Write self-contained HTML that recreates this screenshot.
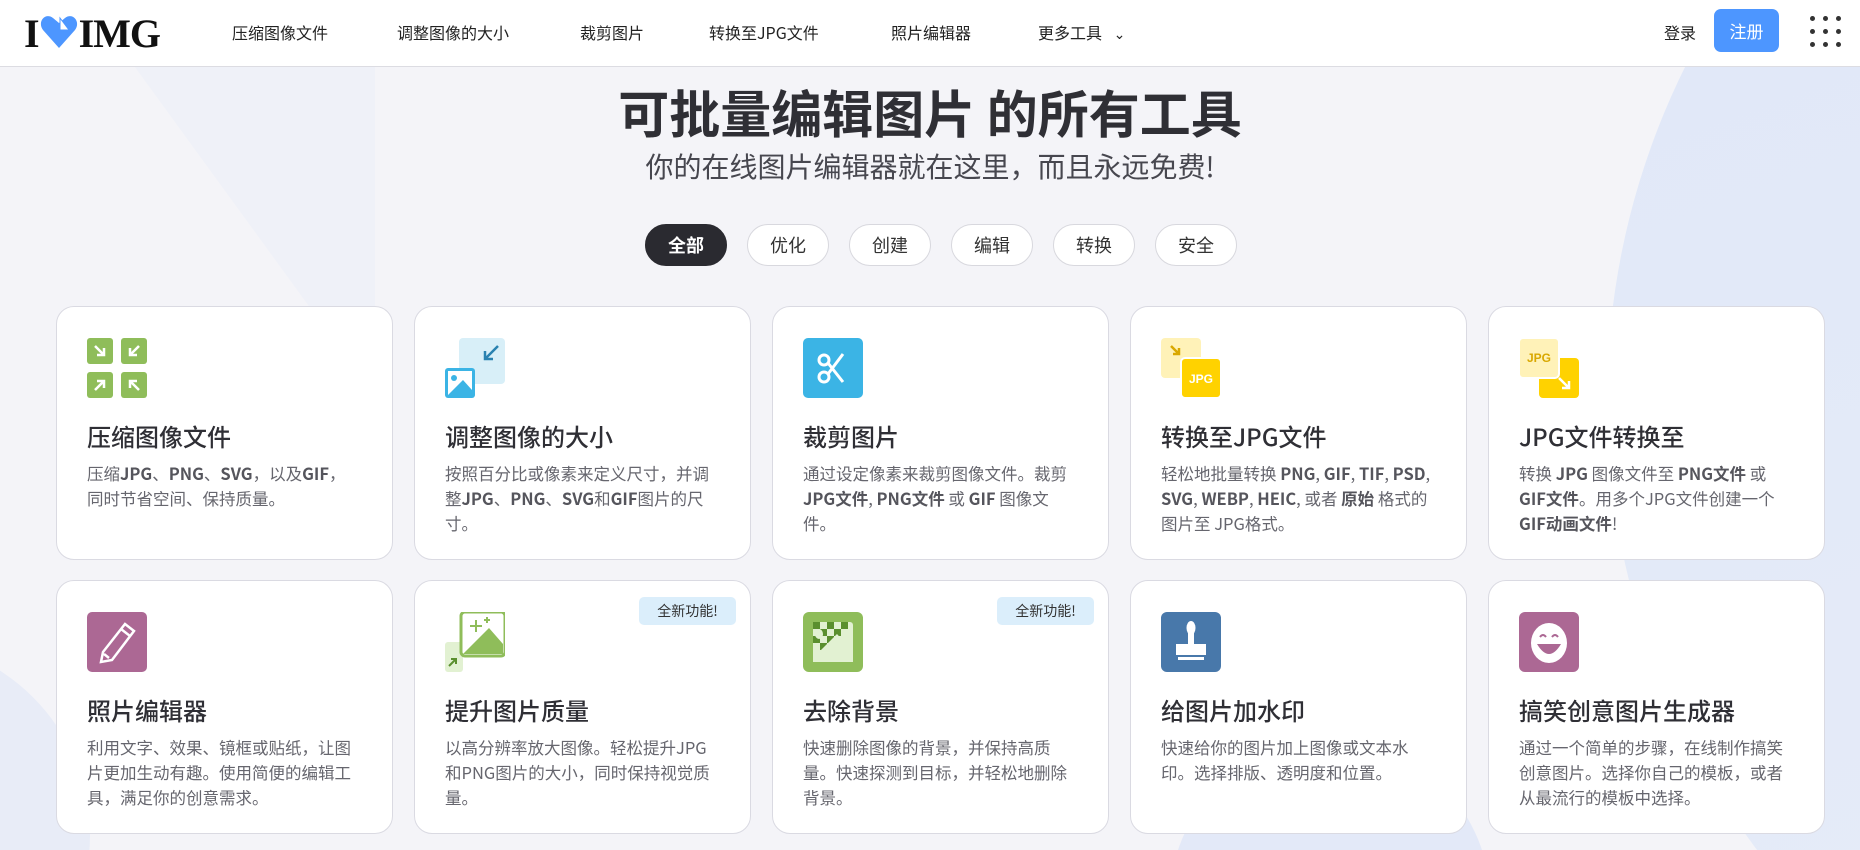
<!DOCTYPE html>
<html><head><meta charset="utf-8"><style>
*{margin:0;padding:0;box-sizing:border-box}
html,body{width:1860px;height:850px;overflow:hidden}
body{background:#f4f4f8;font-family:"Liberation Sans","Noto Sans CJK SC",sans-serif;color:#33333b;position:relative}
.nav{position:absolute;left:0;top:0;width:1860px;height:67px;background:#fff;border-bottom:1px solid #dcdce2;z-index:2}
.nav a{position:absolute;top:20px;font-size:16px;color:#222;text-decoration:none;font-family:"Noto Sans CJK SC",sans-serif}
.logo{position:absolute;left:24px;top:10px;font-family:"Liberation Serif",serif;font-weight:bold;font-size:40px;color:#111;letter-spacing:-1px}
.reg{position:absolute;left:1714px;top:9px;width:65px;height:43px;background:#4d96ff;border-radius:7px;color:#fff;font-size:17px;text-align:center;line-height:43px;font-family:"Noto Sans CJK SC",sans-serif}
.dots{position:absolute;left:1810px;top:16px;width:32px;height:32px}
.dots i{position:absolute;width:5px;height:5px;border-radius:50%;background:#333}
.bg1{position:absolute;left:1607px;top:-350px;width:1500px;height:1500px;border-radius:50%;background:linear-gradient(160deg,#dfe7f8,#e8edf8);}
.bg2{position:absolute;left:-300px;top:640px;width:390px;height:390px;border-radius:50%;background:#e8ecf7}
.bg3{position:absolute;left:1170px;top:740px;width:320px;height:320px;border-radius:50%;background:#e3e9f8}
.tri{position:absolute;left:195px;top:67px;width:0;height:0;border-left:120px solid transparent;border-right:120px solid transparent;border-top:330px solid #eceff8;opacity:.7;transform:skewX(20deg)}
h1{position:absolute;top:76px;left:0;width:1860px;text-align:center;font-size:51px;font-weight:bold;color:#2f2f35;font-family:"Noto Sans CJK SC",sans-serif;line-height:70px}
.sub{position:absolute;top:146px;left:0;width:1860px;text-align:center;font-size:28px;color:#47474f;font-family:"Noto Sans CJK SC",sans-serif;line-height:40px}
.pill{position:absolute;top:224px;width:82px;height:42px;border-radius:21px;border:1px solid #d8d8de;background:#fff;text-align:center;line-height:40px;font-size:18px;color:#333;font-family:"Noto Sans CJK SC",sans-serif}
.pill.on{background:#2a2a30;color:#fff;border-color:#2a2a30;font-weight:bold}
.card{position:absolute;width:337px;height:254px;background:#fff;border:1px solid #dadae2;border-radius:18px;font-family:"Noto Sans CJK SC",sans-serif}
.card .ic{position:absolute;left:30px;top:31px;width:60px;height:60px}
.card h3{position:absolute;left:30px;top:112px;font-size:24px;font-weight:500;color:#2f2f35;line-height:34px;white-space:nowrap}
.card p{position:absolute;left:30px;top:154px;width:272px;font-size:16.5px;line-height:25px;color:#66666e}
.card p b{color:#55555c}
.badge{position:absolute;right:14px;top:16px;width:97px;height:28px;background:#dbeefb;border-radius:5px;font-size:14px;text-align:center;line-height:28px;color:#333}
</style></head><body>
<div class="bg1"></div><div class="bg2"></div><div class="bg3"></div><div class="tri"></div>
<div class="nav">
 <div class="logo">I<svg width="40" height="36" viewBox="0 0 40 36" style="vertical-align:-3px"><path d="M20 34 L4 16 C-2 8 6 -2 14 4 L20 9 L26 4 C34 -2 42 8 36 16 Z" fill="#4d96ff"/><path d="M21 4 L30 16 L21 16Z" fill="#fff" stroke="#4d96ff"/></svg>IMG</div>
 <a style="left:232px">压缩图像文件</a>
 <a style="left:397px">调整图像的大小</a>
 <a style="left:580px">裁剪图片</a>
 <a style="left:709px">转换至JPG文件</a>
 <a style="left:891px">照片编辑器</a>
 <a style="left:1038px">更多工具 <span style="font-size:14px;margin-left:8px">&#8964;</span></a>
 <a style="left:1664px">登录</a>
 <div class="reg">注册</div>
 <div class="dots"><i style="left:0;top:0"></i><i style="left:13px;top:0"></i><i style="left:26px;top:0"></i><i style="left:0;top:13px"></i><i style="left:13px;top:13px"></i><i style="left:26px;top:13px"></i><i style="left:0;top:26px"></i><i style="left:13px;top:26px"></i><i style="left:26px;top:26px"></i></div>
</div>
<h1>可批量编辑图片 的所有工具</h1>
<div class="sub">你的在线图片编辑器就在这里，而且永远免费!</div>
<div class="pill on" style="left:645px">全部</div>
<div class="pill" style="left:747px">优化</div>
<div class="pill" style="left:849px">创建</div>
<div class="pill" style="left:951px">编辑</div>
<div class="pill" style="left:1053px">转换</div>
<div class="pill" style="left:1155px">安全</div>

<div class="card" style="left:56px;top:306px"><svg class="ic" viewBox="0 0 60 60"><g fill="#8fbd5a"><rect x="0" y="0" width="26" height="26" rx="3"/><rect x="34" y="0" width="26" height="26" rx="3"/><rect x="0" y="34" width="26" height="26" rx="3"/><rect x="34" y="34" width="26" height="26" rx="3"/></g><g stroke="#fff" stroke-width="2.5" fill="none"><path d="M8 8 L17 17 M17 10 V17 H10"/><path d="M52 8 L43 17 M43 10 V17 H50"/><path d="M8 52 L17 43 M10 43 H17 V50"/><path d="M52 52 L43 43 M50 43 H43 V50"/></g></svg><h3>压缩图像文件</h3><p>压缩<b>JPG</b>、<b>PNG</b>、<b>SVG</b>，以及<b>GIF</b>，同时节省空间、保持质量。</p></div>
<div class="card" style="left:414px;top:306px"><svg class="ic" viewBox="0 0 60 60"><rect x="14" y="0" width="46" height="46" rx="4" fill="#d8eff8"/><path d="M53 8 L40 21 M40 13 V21 H48" stroke="#2a82b0" stroke-width="2.5" fill="none"/><rect x="0" y="30" width="30" height="30" rx="3" fill="#3bb4e5"/><rect x="3" y="33" width="24" height="24" fill="#fff"/><circle cx="9" cy="40" r="3" fill="#3bb4e5"/><path d="M3 57 L18 42 L27 52 V57Z" fill="#3bb4e5"/></svg><h3>调整图像的大小</h3><p>按照百分比或像素来定义尺寸，并调整<b>JPG</b>、<b>PNG</b>、<b>SVG</b>和<b>GIF</b>图片的尺寸。</p></div>
<div class="card" style="left:772px;top:306px"><svg class="ic" viewBox="0 0 60 60"><rect width="60" height="60" rx="5" fill="#3bb4e5"/><g stroke="#fff" stroke-width="3" fill="none"><circle cx="21" cy="22" r="5"/><circle cx="21" cy="39" r="5"/><path d="M25 25 L40 44 M25 36 L40 16"/></g></svg><h3>裁剪图片</h3><p>通过设定像素来裁剪图像文件。裁剪<b>JPG文件</b>, <b>PNG文件</b> 或 <b>GIF</b> 图像文件。</p></div>
<div class="card" style="left:1130px;top:306px"><svg class="ic" viewBox="0 0 60 60"><rect x="0" y="0" width="40" height="40" rx="4" fill="#fff2b8"/><path d="M10 8 L18 16 M18 10 V16 H12" stroke="#d9a800" stroke-width="2.5" fill="none"/><rect x="20" y="20" width="40" height="40" rx="4" fill="#ffd200" stroke="#fff" stroke-width="2"/><text x="40" y="45" text-anchor="middle" font-family="Liberation Sans" font-weight="bold" font-size="12" fill="#fff">JPG</text></svg><h3>转换至JPG文件</h3><p>轻松地批量转换 <b>PNG</b>, <b>GIF</b>, <b>TIF</b>, <b>PSD</b>, <b>SVG</b>, <b>WEBP</b>, <b>HEIC</b>, 或者 <b>原始</b> 格式的图片至 JPG格式。</p></div>
<div class="card" style="left:1488px;top:306px"><svg class="ic" viewBox="0 0 60 60"><rect x="20" y="20" width="40" height="40" rx="4" fill="#ffd200"/><path d="M40 40 L50 50 M50 43 V50 H43" stroke="#fff" stroke-width="2.5" fill="none"/><rect x="0" y="0" width="40" height="40" rx="4" fill="#fff2b8" stroke="#fff" stroke-width="2"/><text x="20" y="24" text-anchor="middle" font-family="Liberation Sans" font-weight="bold" font-size="12" fill="#d9a800">JPG</text></svg><h3>JPG文件转换至</h3><p>转换 <b>JPG</b> 图像文件至 <b>PNG文件</b> 或 <b>GIF文件</b>。用多个JPG文件创建一个<b>GIF动画文件</b>!</p></div>

<div class="card" style="left:56px;top:580px"><svg class="ic" viewBox="0 0 60 60"><rect width="60" height="60" rx="5" fill="#ac6894"/><g stroke="#fff" stroke-width="2.5" fill="none"><path d="M38 12 L47 19 L25 48 L14 50 L16 40 Z M34 17 L43 24 M17 42 L22 46"/></g></svg><h3>照片编辑器</h3><p>利用文字、效果、镜框或贴纸，让图片更加生动有趣。使用简便的编辑工具，满足你的创意需求。</p></div>
<div class="card" style="left:414px;top:580px"><div class="badge">全新功能!</div><svg class="ic" viewBox="0 0 60 60"><rect x="0" y="30" width="18" height="30" rx="3" fill="#e2f1d2"/><path d="M4 54 L11 47 M6 47 H11 V52" stroke="#5a8f2e" stroke-width="2" fill="none"/><rect x="16" y="0" width="44" height="44" rx="4" fill="#fff" stroke="#8fbd5a" stroke-width="3"/><path d="M18 42 L44 16 L58 32 V42Z" fill="#8fbd5a"/><path d="M31 8 V20 M25 14 H37 M42 5 V11 M39 8 H45" stroke="#8fbd5a" stroke-width="2"/></svg><h3>提升图片质量</h3><p>以高分辨率放大图像。轻松提升JPG和PNG图片的大小，同时保持视觉质量。</p></div>
<div class="card" style="left:772px;top:580px"><div class="badge">全新功能!</div><svg class="ic" viewBox="0 0 60 60"><rect width="60" height="60" rx="6" fill="#8fbd5a"/><rect x="10" y="10" width="40" height="40" rx="3" fill="#e2f1d2"/><g fill="#5a8f2e"><rect x="10" y="10" width="7" height="7"/><rect x="24" y="10" width="7" height="7"/><rect x="38" y="10" width="7" height="7"/><rect x="17" y="17" width="7" height="7"/><rect x="31" y="17" width="7" height="7"/><rect x="10" y="24" width="7" height="7"/><rect x="24" y="24" width="7" height="7"/><rect x="17" y="31" width="7" height="7"/></g><ellipse cx="16" cy="22" rx="4" ry="5" fill="#e2f1d2"/><path d="M10 50 L10 46 L34 22 L50 40 V50Z" fill="#e2f1d2"/></svg><h3>去除背景</h3><p>快速删除图像的背景，并保持高质量。快速探测到目标，并轻松地删除背景。</p></div>
<div class="card" style="left:1130px;top:580px"><svg class="ic" viewBox="0 0 60 60"><rect width="60" height="60" rx="6" fill="#4878aa"/><g fill="#fff"><ellipse cx="30" cy="16" rx="4.5" ry="7"/><rect x="27" y="20" width="6" height="12"/><rect x="15" y="32" width="30" height="11"/><rect x="17" y="45" width="26" height="3"/></g></svg><h3>给图片加水印</h3><p>快速给你的图片加上图像或文本水印。选择排版、透明度和位置。</p></div>
<div class="card" style="left:1488px;top:580px"><svg class="ic" viewBox="0 0 60 60"><rect width="60" height="60" rx="6" fill="#ac6894"/><ellipse cx="30" cy="31" rx="18" ry="20" fill="#fff"/><path d="M18 32 Q30 52 42 32 Z" fill="#ac6894"/><path d="M21 25 Q24 21 27 25 M33 25 Q36 21 39 25" stroke="#ac6894" stroke-width="2" fill="none"/></svg><h3>搞笑创意图片生成器</h3><p>通过一个简单的步骤，在线制作搞笑创意图片。选择你自己的模板，或者从最流行的模板中选择。</p></div>
</body></html>
